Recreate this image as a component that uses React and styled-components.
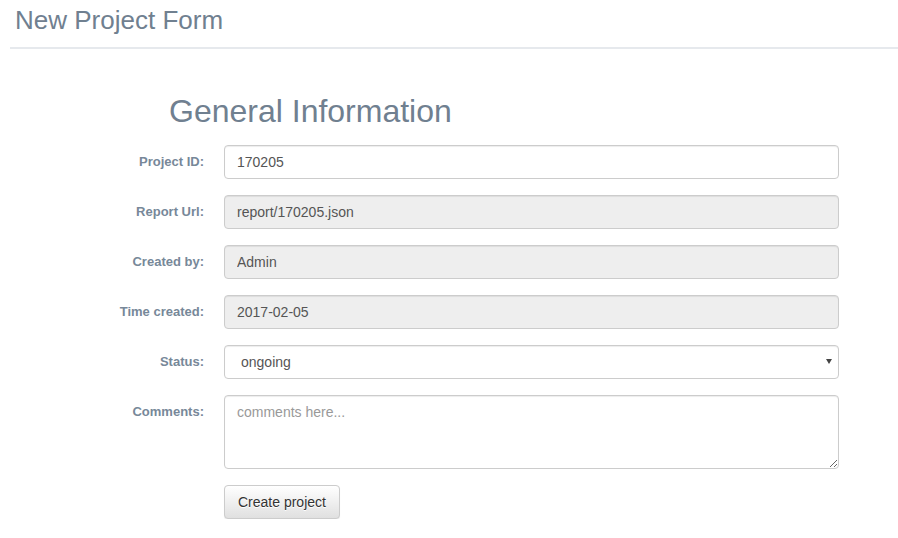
import React from "react";
import styled, { createGlobalStyle } from "styled-components";

const Global = createGlobalStyle`
  html, body { margin: 0; padding: 0; background: #fff; }
  body {
    font-family: "Liberation Sans", Arial, Helvetica, sans-serif;
    font-size: 14px;
    line-height: 1.42857;
    color: #333;
  }
  * { box-sizing: border-box; }
`;

const Page = styled.div`
  width: 898px;
`;

const Header = styled.header`
  margin-left: 10px;
  padding: 6px 0 12px 5px;
  border-bottom: 2px solid #e6e9ed;
`;

const PageTitle = styled.h1`
  margin: 0;
  font-size: 26px;
  line-height: 1.1;
  font-weight: 400;
  color: #708090;
`;

const Section = styled.section`
  padding-top: 45px;
`;

const SectionTitle = styled.h2`
  margin: 0 0 16px 169px;
  font-size: 32px;
  line-height: 1.1;
  font-weight: 400;
  color: #708090;
`;

const Form = styled.form`
  display: grid;
  grid-template-columns: 204px 615px;
  column-gap: 20px;
  row-gap: 16px;
  align-items: start;
`;

const Label = styled.label`
  padding-top: 7px;
  line-height: 20px;
  font-size: 13px;
  font-weight: 700;
  color: #778899;
  text-align: right;
`;

const Input = styled.input`
  display: block;
  width: 100%;
  height: 34px;
  padding: 6px 12px;
  font-family: inherit;
  font-size: 14px;
  line-height: 20px;
  color: #555;
  background: ${(p) => (p.disabled ? "#eee" : "#fff")};
  border: 1px solid #ccc;
  border-radius: 4px;
  box-shadow: inset 0 1px 1px rgba(0, 0, 0, 0.075);
  opacity: 1;
  -webkit-text-fill-color: #555;
  &:disabled { cursor: not-allowed; }
`;

const SelectWrap = styled.div`
  position: relative;
  &::after {
    content: "";
    position: absolute;
    right: 7px;
    top: 14px;
    border-left: 3.5px solid transparent;
    border-right: 3.5px solid transparent;
    border-top: 5px solid #444;
    pointer-events: none;
  }
`;

const Select = styled.select`
  display: block;
  width: 100%;
  height: 34px;
  padding: 6px 24px 6px 16px;
  font-family: inherit;
  font-size: 14px;
  line-height: 20px;
  color: #555;
  background: #fff;
  border: 1px solid #ccc;
  border-radius: 4px;
  box-shadow: inset 0 1px 1px rgba(0, 0, 0, 0.075);
  appearance: none;
  -webkit-appearance: none;
`;

const TextArea = styled.textarea`
  display: block;
  width: 100%;
  height: 74px;
  padding: 6px 12px;
  font-family: inherit;
  font-size: 14px;
  line-height: 20px;
  color: #555;
  background: #fff;
  border: 1px solid #ccc;
  border-radius: 4px;
  box-shadow: inset 0 1px 1px rgba(0, 0, 0, 0.075);
  resize: vertical;
  &::placeholder { color: #999; opacity: 1; }
`;

const Button = styled.button`
  grid-column: 2;
  justify-self: start;
  height: 34px;
  padding: 6px 13px;
  font-family: inherit;
  font-size: 14px;
  line-height: 20px;
  color: #333;
  background-image: linear-gradient(to bottom, #fff 0, #e0e0e0 100%);
  border: 1px solid #ccc;
  border-radius: 4px;
  text-shadow: 0 1px 0 #fff;
  box-shadow: inset 0 1px 0 rgba(255, 255, 255, 0.15), 0 1px 1px rgba(0, 0, 0, 0.075);
  cursor: pointer;
`;

const fields = [
  { id: "pid", label: "Project ID:", value: "170205", disabled: false },
  { id: "url", label: "Report Url:", value: "report/170205.json", disabled: true },
  { id: "by", label: "Created by:", value: "Admin", disabled: true },
  { id: "time", label: "Time created:", value: "2017-02-05", disabled: true },
];

export default function App() {
  return (
    <Page>
      <Global />
      <Header>
        <PageTitle>New Project Form</PageTitle>
      </Header>
      <Section>
        <SectionTitle>General Information</SectionTitle>
        <Form onSubmit={(e) => e.preventDefault()}>
          {fields.map((f) => (
            <React.Fragment key={f.id}>
              <Label htmlFor={f.id}>{f.label}</Label>
              <Input id={f.id} defaultValue={f.value} disabled={f.disabled} />
            </React.Fragment>
          ))}
          <Label htmlFor="status">Status:</Label>
          <SelectWrap>
            <Select id="status" defaultValue="ongoing">
              <option value="ongoing">ongoing</option>
              <option value="finished">finished</option>
            </Select>
          </SelectWrap>
          <Label htmlFor="comments">Comments:</Label>
          <TextArea id="comments" rows={3} placeholder="comments here..." />
          <Button type="submit">Create project</Button>
        </Form>
      </Section>
    </Page>
  );
}
